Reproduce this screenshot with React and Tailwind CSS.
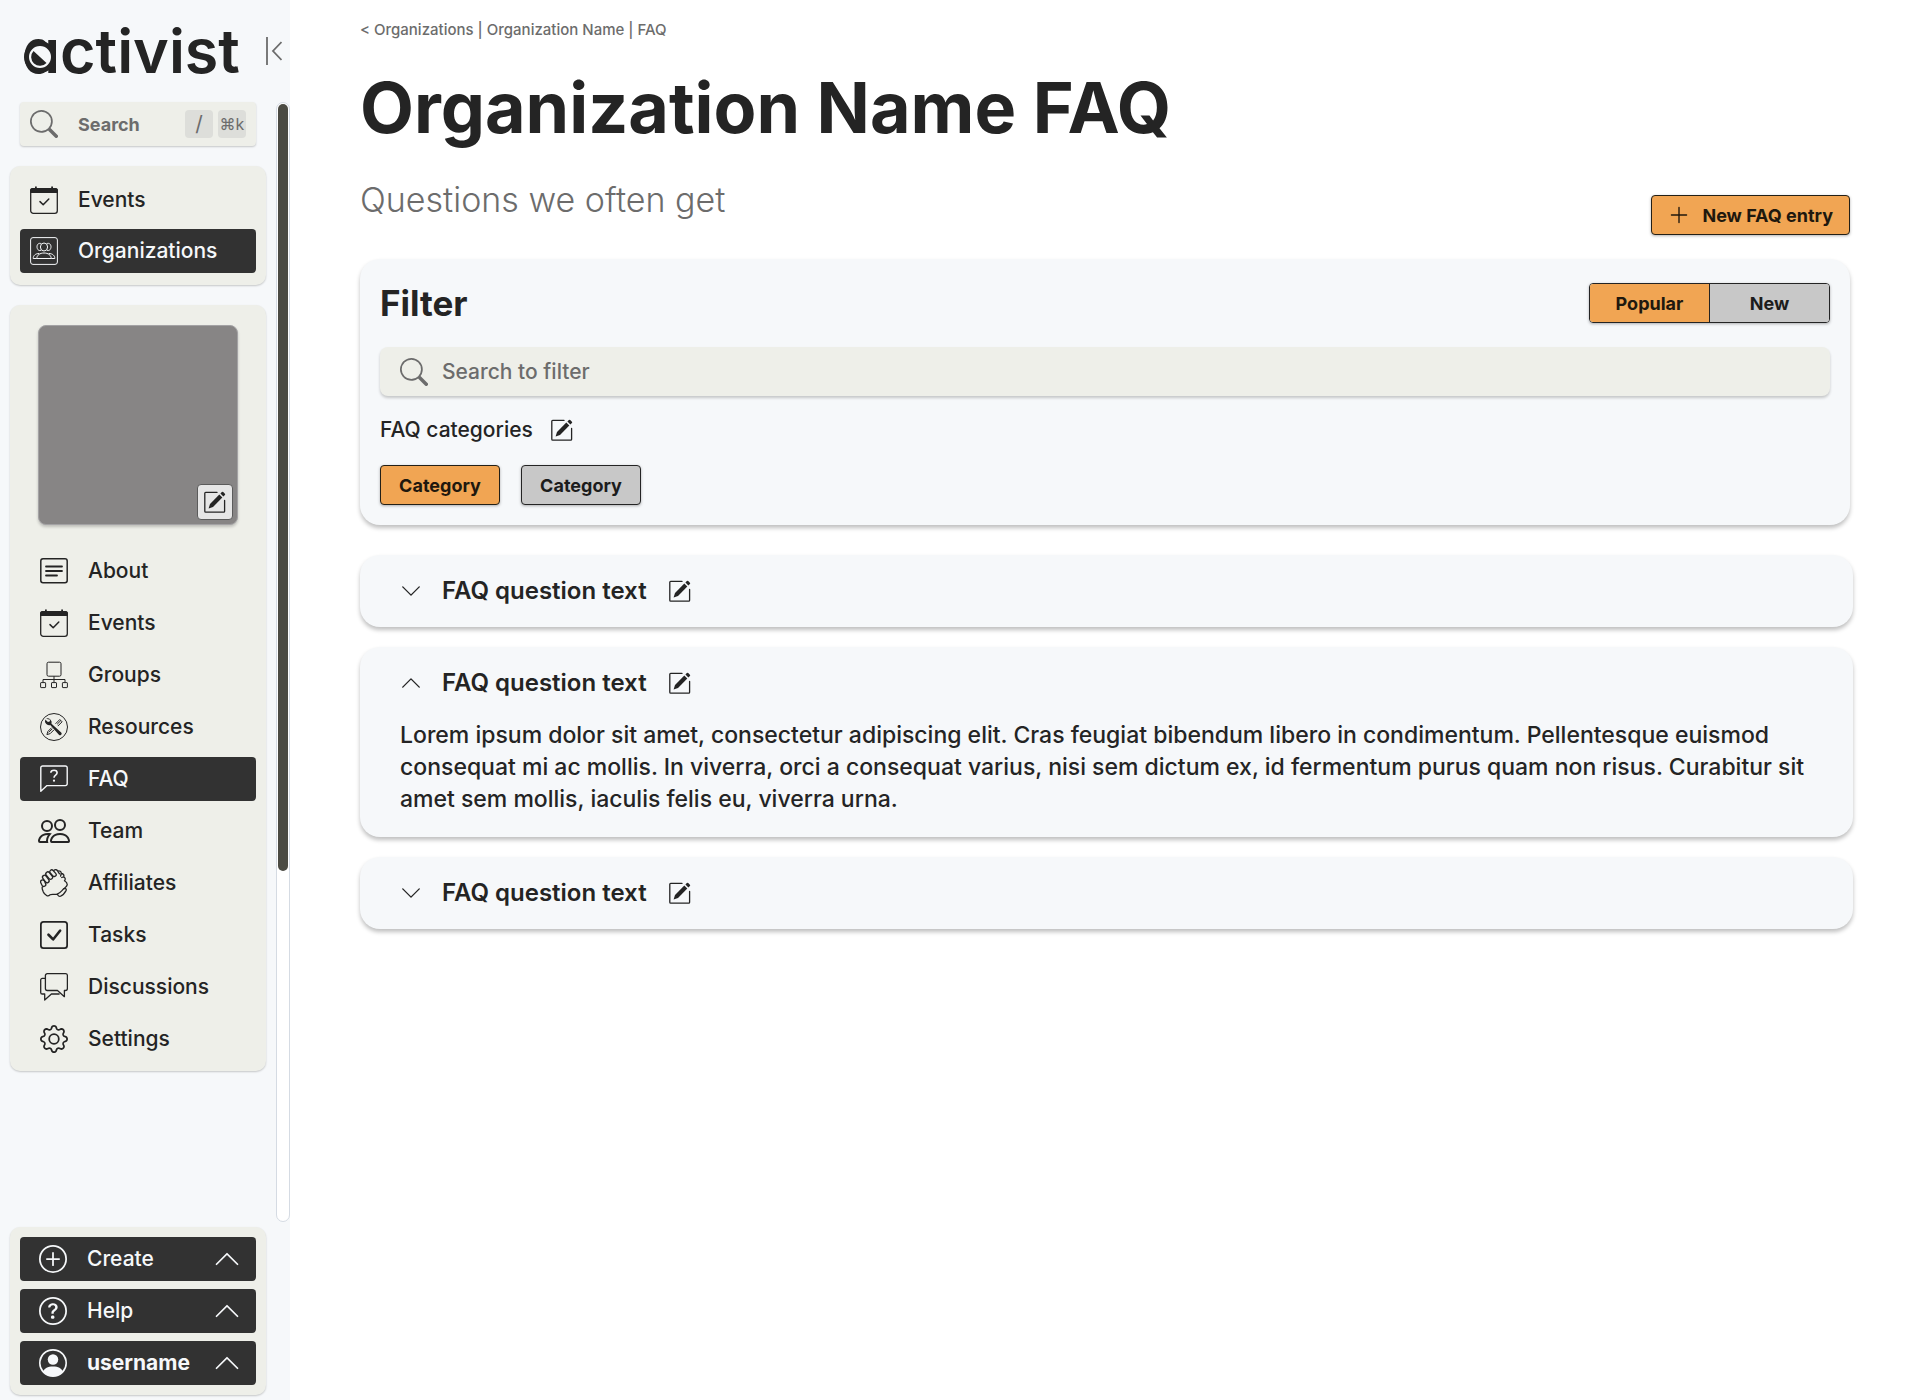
import React from "react";
import {
  BsCheckSquare,
  BsChevronDown,
  BsChevronUp,
  BsGear,
  BsPeople,
  BsPersonCircle,
  BsPlusCircle,
  BsPlusLg,
  BsQuestionCircle,
  BsSearch,
} from "react-icons/bs";

function EditIcon({ className }) {
  return (
    <svg viewBox="0 0 22 22" className={className} fill="none" stroke="currentColor" strokeWidth="1.3" strokeLinecap="round" aria-hidden="true">
      <path d="M13 1.4H1.7A.9.9 0 0 0 .8 2.3v18a.9.9 0 0 0 .9.9h18a.9.9 0 0 0 .9-.9V9.5" />
      <path d="M4.6 17.600 6 12.900 15.300 3.600l3 3L9 15.900z" fill="currentColor" stroke="none" />
      <path d="M16.4 2.500 17.900 1a.9.9 0 0 1 1.300 0l1.700 1.700a.9.9 0 0 1 0 1.300l-1.500 1.500z" fill="currentColor" stroke="none" />
    </svg>
  );
}

function AboutIcon({ className }) {
  return (
    <svg viewBox="0 0 28 28" className={className} fill="none" stroke="currentColor" strokeWidth="1.5" strokeLinecap="round" aria-hidden="true">
      <rect x=".8" y="1.8" width="26.4" height="24" rx="2.2" />
      <path d="M6 9.500h16M6 14h16M6 18.500h11" strokeWidth="1.800" />
    </svg>
  );
}

function CalendarIcon({ className }) {
  return (
    <svg viewBox="0 0 28 28" className={className} fill="none" stroke="currentColor" aria-hidden="true">
      <rect x=".7" y="2.7" width="26.6" height="24.6" rx="2.6" strokeWidth="1.3" />
      <path d="M0 7V4.6A2.6 2.6 0 0 1 2.6 2H5V.4h1.8V2h14.4V.4H23V2h2.4A2.6 2.6 0 0 1 28 4.600V7z" fill="currentColor" stroke="none" />
      <path d="m10 15.600 3.200 3.200 5.600-5.800" strokeWidth="1.500" strokeLinecap="round" strokeLinejoin="round" />
    </svg>
  );
}

function OrganizationsIcon({ className }) {
  return (
    <svg viewBox="0 0 28 28" className={className} fill="none" stroke="currentColor" strokeWidth="1" aria-hidden="true">
      <rect x=".6" y=".6" width="26.800" height="26.800" rx="2.400" />
      <ellipse cx="14" cy="10" rx="3.600" ry="4" />
      <path d="M11.200 6.600C8.500 5.600 7 7.600 7 9.800s1.500 4.600 4 3.500M16.800 6.600c2.700-1 4.200 1 4.200 3.200s-1.500 4.600-4 3.500" />
      <path d="M6.800 21.500c0-3.300 3-5.500 7.200-5.500s7.200 2.200 7.200 5.500z" />
      <path d="M6.800 21.500H3.200c0-2.900 2.200-5 6-5M21.200 21.500h3.600c0-2.900-2.200-5-6-5" />
    </svg>
  );
}

function GroupsIcon({ className }) {
  return (
    <svg viewBox="0 0 28 28" className={className} fill="none" stroke="currentColor" strokeWidth="1" aria-hidden="true">
      <rect x="7" y="1.200" width="14" height="14" rx="1.500" />
      <path d="M14 15.200v6M3 21.500v-3h22v3" />
      <rect x=".6" y="21.600" width="5" height="5" rx=".5" />
      <rect x="11.500" y="21.600" width="5" height="5" rx=".5" />
      <rect x="22.400" y="21.600" width="5" height="5" rx=".5" />
    </svg>
  );
}

function ResourcesIcon({ className }) {
  return (
    <svg viewBox="0 0 28 28" className={className} fill="none" stroke="currentColor" aria-hidden="true">
      <circle cx="14" cy="14" r="13.500" strokeWidth="1" />
      <path d="m15.500 10.800 4.300-4.300 2.300 2.300-4.300 4.300M17.200 11.200l3.600-3.600M11.600 14.700l-3.700 3.700-1 3.200 3.300-1 3.700-3.700M8.700 19.400l3.700-3.700" strokeWidth="1" />
      <path d="M6 5.700a4.100 4.100 0 0 1 5.500 5l9.700 8.700a1.600 1.600 0 0 1-2.300 2.300L10.200 12a4.100 4.100 0 0 1-4.900-5.500l2.600 2.400 1.800-.5.400-1.700z" fill="currentColor" stroke="none" />
    </svg>
  );
}

function FaqIcon({ className }) {
  return (
    <svg viewBox="0 0 28 28" className={className} fill="none" stroke="currentColor" strokeWidth="1.400" strokeLinejoin="round" aria-hidden="true">
      <path d="M.8 26.300V2.800A1.800 1.800 0 0 1 2.600 1h22.800a1.800 1.800 0 0 1 1.800 1.800v16a1.800 1.800 0 0 1-1.800 1.800H7z" />
      <path d="M10.800 7.700c.2-3.300 6.300-3.400 6.300.1 0 2.400-3.100 2.300-3.100 5" strokeWidth="1.600" />
      <circle cx="14" cy="15.700" r="1.100" fill="currentColor" stroke="none" />
    </svg>
  );
}

function TeamIcon({ className }) {
  return (
    <span className={`flex items-center justify-center ${className}`}>
      <BsPeople className="size-8 shrink-0" />
    </span>
  );
}

function AffiliatesIcon({ className }) {
  return (
    <svg viewBox="0 0 28 28" className={className} fill="none" stroke="currentColor" strokeWidth="1.300" strokeLinejoin="round" strokeLinecap="round" aria-hidden="true">
      <rect x="-2" y="-3.400" width="4" height="6.800" rx="2" transform="translate(3.200 14.200) rotate(-25)" />
      <rect x="-2" y="-4.200" width="4" height="8.400" rx="2" transform="translate(5.800 10) rotate(-36)" />
      <rect x="-2" y="-4.200" width="4" height="8.400" rx="2" transform="translate(9.200 6.600) rotate(-40)" />
      <rect x="-1.900" y="-3.800" width="3.800" height="7.600" rx="1.900" transform="translate(13 4.200) rotate(-42)" />
      <path d="M13.800 1.400c1.500-1.200 3.200-.8 3.900.7 1.800-.8 3.800.5 3.500 2.400 1.900-.1 3.200 1.600 2.500 3.400 1.700.7 2 2.600.8 3.900 1.900 1.200 2.900 2.500 2.700 4-.3 1.600-1.700 2.400-3.100 3.800M17.700 2.100l1.800 2.700M21.200 4.500l-.6 2.600M23.700 7.900l-2 .6" />
      <path d="M2.300 18c-.6 2.200.5 3 .9 4.700.7 2 1.900 2.800 3.400 3.800 1.500 1 2.400.3 3.500-.7 2-1.200 4.900.2 7.300-.7 3-1.200 4.600-3.900 6.700-5.500" />
      <path d="M24.100 19.600c1.600-.6 2.700.6 1.800 2.300-1.200 2.100-3.200 4.600-5.300 5.300-1.400.4-2.700-.2-3.200-2" />
    </svg>
  );
}

function DiscussionsIcon({ className }) {
  return (
    <svg viewBox="0 0 28 28" className={className} fill="none" stroke="currentColor" strokeWidth="1.300" strokeLinejoin="round" aria-hidden="true">
      <path d="M7.300.7h18.200a1.900 1.900 0 0 1 1.900 1.900v13a1.900 1.900 0 0 1-1.900 1.900h-1.100v6.200l-6.900-6.200H7.300a1.900 1.900 0 0 1-1.900-1.900v-13A1.900 1.900 0 0 1 7.300.7z" />
      <path d="M5.400 5.400H2.300A1.600 1.600 0 0 0 .7 7v12.400A1.600 1.600 0 0 0 2.300 21h2.400v6l6.700-6h8.200" />
    </svg>
  );
}

const ORG_LINKS = [
  { label: "About", Icon: AboutIcon },
  { label: "Events", Icon: CalendarIcon },
  { label: "Groups", Icon: GroupsIcon },
  { label: "Resources", Icon: ResourcesIcon },
  { label: "FAQ", Icon: FaqIcon, active: true },
  { label: "Team", Icon: TeamIcon },
  { label: "Affiliates", Icon: AffiliatesIcon },
  { label: "Tasks", Icon: BsCheckSquare },
  { label: "Discussions", Icon: DiscussionsIcon },
  { label: "Settings", Icon: BsGear },
];

const MENU_BUTTONS = [
  { label: "Create", Icon: BsPlusCircle },
  { label: "Help", Icon: BsQuestionCircle },
  { label: "username", Icon: BsPersonCircle, bold: true },
];

const ANSWER =
  "Lorem ipsum dolor sit amet, consectetur adipiscing elit. Cras feugiat bibendum libero in condimentum. Pellentesque euismod consequat mi ac mollis. In viverra, orci a consequat varius, nisi sem dictum ex, id fermentum purus quam non risus. Curabitur sit amet sem mollis, iaculis felis eu, viverra urna.";

const FAQS = [
  { id: 1, open: false },
  { id: 2, open: true },
  { id: 3, open: false },
];

function NavLink({ label, Icon, active, className }) {
  return (
    <a
      href="#"
      aria-current={active ? "page" : undefined}
      className={`flex h-11 items-center gap-5 rounded text-[21px] font-medium ${active ? "bg-[#323232] text-[#f6f8fa]" : "text-[#242424]"} ${className}`}
    >
      <Icon className="size-7 shrink-0" />
      {label}
    </a>
  );
}

function Logo() {
  return (
    <a href="#" className="relative text-[61px] leading-none font-semibold text-[#242424] [font-feature-settings:'cv11']">
      activist
      <svg viewBox="0 0 36 36" className="absolute top-[18px] left-0 size-9" aria-hidden="true">
        <circle cx="18" cy="18" r="13.500" fill="#f6f8fa" stroke="currentColor" strokeWidth="5" />
        <path d="M11.500 12A8.800 8.800 0 1 0 24.500 24z" fill="currentColor" />
      </svg>
    </a>
  );
}

function Sidebar() {
  return (
    <aside className="flex min-h-screen w-[290px] shrink-0 flex-col bg-[#f6f8fa]">
      <div className="flex h-[102px] items-center justify-between pr-2 pl-[22px]">
        <Logo />
        <button type="button" aria-label="Collapse sidebar" className="text-[#6c6c6c]">
          <svg viewBox="0 0 16 28" className="h-7 w-4" fill="none" stroke="currentColor" strokeWidth="1.800">
            <path d="M1 0v28M15.500 5 7 14l8.500 9" />
          </svg>
        </button>
      </div>

      <div className="flex flex-1 gap-2.5 pl-2.5">
        <div className="flex w-64 flex-col gap-5 pb-[5px]">
          <label className="mx-2.5 flex h-11 items-center rounded bg-[#eeefe9] px-2.5 text-[#6c6c6c] shadow-[0_1px_2px_rgba(0,0,0,0.2)]">
            <BsSearch className="size-7 shrink-0" />
            <input
              type="text"
              aria-label="Search"
              placeholder="Search"
              className="ml-5 w-0 flex-1 bg-transparent text-[18px] font-bold outline-none placeholder:text-[#6c6c6c]"
            />
            <span className="flex gap-[5px]">
              <kbd className="flex size-7 items-center justify-center rounded bg-[#dddeda] font-['Inter',sans-serif] text-[21px]">/</kbd>
              <kbd className="flex size-7 items-center justify-center rounded bg-[#dddeda] font-['Inter',sans-serif] text-[16px]">⌘k</kbd>
            </span>
          </label>

          <nav className="flex flex-col gap-[7px] rounded-[10px] bg-[#eeefe9] px-2.5 py-3 shadow-[0_1px_2px_rgba(0,0,0,0.2)]">
            <NavLink label="Events" Icon={CalendarIcon} className="pl-2.5" />
            <NavLink label="Organizations" Icon={OrganizationsIcon} active className="pl-2.5" />
          </nav>

          <section className="rounded-[10px] bg-[#eeefe9] px-2.5 pt-5 pb-2.5 shadow-[0_1px_2px_rgba(0,0,0,0.2)]">
            <div className="mx-auto mb-6 flex size-[200px] items-end justify-end rounded-lg border border-[#a3a2a4] bg-[#878585] p-1 shadow-[0_2px_3px_rgba(0,0,0,0.2)]">
              <button type="button" aria-label="Edit image" className="flex size-9 items-center justify-center rounded border border-[#5b5b5b] bg-[#e6e6e6] text-[#242424]">
                <EditIcon className="size-[22px]" />
              </button>
            </div>
            <nav className="flex flex-col gap-2">
              {ORG_LINKS.map((link) => (
                <NavLink key={link.label} {...link} className="pl-5" />
              ))}
            </nav>
          </section>

          <div className="mt-auto flex flex-col gap-2 rounded-[10px] bg-[#eeefe9] p-2.5 shadow-[0_1px_2px_rgba(0,0,0,0.2)]">
            {MENU_BUTTONS.map(({ label, Icon, bold }) => (
              <button
                key={label}
                type="button"
                className={`flex h-11 items-center rounded bg-[#323232] pr-[15px] pl-[19px] text-[21px] text-[#f6f8fa] ${bold ? "font-bold" : "font-medium"}`}
              >
                <Icon className="mr-5 size-7 shrink-0" />
                {label}
                <BsChevronUp className="ml-auto size-7 shrink-0" />
              </button>
            ))}
          </div>
        </div>

        <div className="mb-[178px] flex-1 rounded-full border border-[#d5dbe3] bg-white p-px">
          <div className="h-11/16 rounded-full bg-[#4b4b43]" />
        </div>
      </div>
    </aside>
  );
}

function FaqCard({ open }) {
  const Chevron = open ? BsChevronUp : BsChevronDown;
  return (
    <article className={`rounded-[20px] bg-[#f6f8fa] px-10 shadow-[0_3px_4px_rgba(0,0,0,0.25)] ${open ? "pb-[22px]" : ""}`}>
      <div className="flex h-[72px] items-center gap-[22px] text-[#242424]">
        <button type="button" aria-expanded={open} className="flex items-center gap-5 text-2xl font-semibold">
          <Chevron className="size-[22px]" />
          FAQ question text
        </button>
        <button type="button" aria-label="Edit question">
          <EditIcon className="size-[22px]" />
        </button>
      </div>
      {open && <p className="text-[23px] leading-8 font-medium text-[#242424]">{ANSWER}</p>}
    </article>
  );
}

export default function App() {
  return (
    <div className="flex min-h-screen bg-white font-['Inter',sans-serif]">
      <Sidebar />
      <main className="flex-1 pr-[67px] pl-[70px]">
        <div className="mr-[3px]">
          <nav aria-label="Breadcrumb" className="pt-[18px] text-[15px] leading-6 font-medium text-[#6c6c6c]">
            <a href="#">&lt; Organizations</a> | <a href="#">Organization Name</a> | <a href="#">FAQ</a>
          </nav>
          <h1 className="mt-[21px] text-[70px] leading-[90px] font-bold text-[#242424]">Organization Name FAQ</h1>
          <div className="mt-[23px] flex items-end justify-between">
            <p className="mb-[11px] text-[34px] leading-12 font-light text-[#6c6c6c]">Questions we often get</p>
            <button
              type="button"
              className="flex h-10 items-center gap-3 rounded border border-[#242017] bg-[#f1a553] px-4 text-[18px] font-bold text-[#20180e] shadow-[0_1px_3px_rgba(0,0,0,0.3)]"
            >
              <BsPlusLg className="size-[22px]" />
              New FAQ entry
            </button>
          </div>

          <section className="mt-6 rounded-[20px] bg-[#f6f8fa] p-5 shadow-[0_3px_4px_rgba(0,0,0,0.25)]">
            <div className="flex h-12 items-center justify-between">
              <h2 className="text-[35px] leading-12 font-bold text-[#242424]">Filter</h2>
              <div className="flex h-10 w-[241px] divide-x divide-[#242424] overflow-hidden rounded border border-[#242424] text-[18px] font-bold text-[#20180e] shadow-[0_1px_3px_rgba(0,0,0,0.3)]">
                <button type="button" aria-pressed="true" className="flex-1 bg-[#f1a553]">Popular</button>
                <button type="button" aria-pressed="false" className="flex-1 bg-[#c8c8c8] text-[#1c1c1c]">New</button>
              </div>
            </div>
            <label className="mt-5 flex h-[49px] items-center gap-3.5 rounded-lg bg-[#eeefe9] px-5 text-[#6c6c6c] shadow-[0_2px_3px_rgba(0,0,0,0.2)]">
              <BsSearch className="size-7 shrink-0" />
              <input
                type="text"
                aria-label="Search to filter"
                placeholder="Search to filter"
                className="flex-1 bg-transparent text-[21px] font-medium outline-none placeholder:text-[#6c6c6c]"
              />
            </label>
            <div className="mt-[18px] flex h-8 items-center gap-[18px] text-[21px] font-medium text-[#242424]">
              FAQ categories
              <button type="button" aria-label="Edit categories">
                <EditIcon className="size-[22px]" />
              </button>
            </div>
            <div className="mt-[19px] flex gap-[21px] text-[18px] font-bold">
              <button type="button" className="h-10 w-[120px] rounded border border-[#242017] bg-[#f1a553] text-[#20180e] shadow-[0_1px_3px_rgba(0,0,0,0.3)]">Category</button>
              <button type="button" className="h-10 w-[120px] rounded border border-[#242424] bg-[#c8c8c8] text-[#1c1c1c] shadow-[0_1px_3px_rgba(0,0,0,0.3)]">Category</button>
            </div>
          </section>
        </div>

        <div className="mt-[30px] flex flex-col gap-5">
          {FAQS.map((faq) => (
            <FaqCard key={faq.id} open={faq.open} />
          ))}
        </div>
      </main>
    </div>
  );
}
